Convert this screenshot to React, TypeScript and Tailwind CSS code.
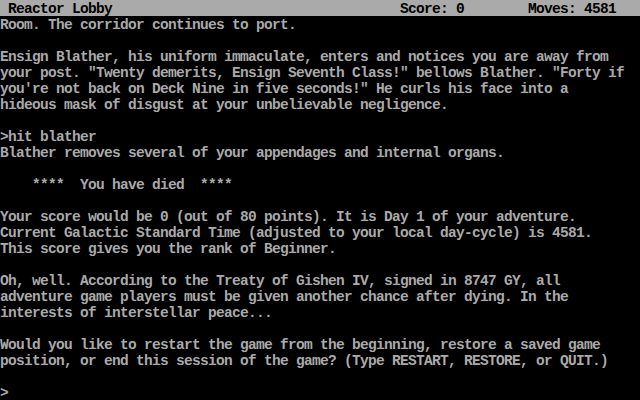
import React from "react";

const lines: string[] = [
  "Room. The corridor continues to port.",
  "",
  "Ensign Blather, his uniform immaculate, enters and notices you are away from",
  "your post. \"Twenty demerits, Ensign Seventh Class!\" bellows Blather. \"Forty if",
  "you're not back on Deck Nine in five seconds!\" He curls his face into a",
  "hideous mask of disgust at your unbelievable negligence.",
  "",
  ">hit blather",
  "Blather removes several of your appendages and internal organs.",
  "",
  "    ****  You have died  ****",
  "",
  "Your score would be 0 (out of 80 points). It is Day 1 of your adventure.",
  "Current Galactic Standard Time (adjusted to your local day-cycle) is 4581.",
  "This score gives you the rank of Beginner.",
  "",
  "Oh, well. According to the Treaty of Gishen IV, signed in 8747 GY, all",
  "adventure game players must be given another chance after dying. In the",
  "interests of interstellar peace...",
  "",
  "Would you like to restart the game from the beginning, restore a saved game",
  "position, or end this session of the game? (Type RESTART, RESTORE, or QUIT.)",
  "",
  ">",
];

export default function App() {
  return (
    <div
      className="w-[640px] h-[400px] bg-black overflow-hidden flex flex-col text-[14.5px] leading-[16px] tracking-[-0.7px] font-bold"
      style={{ fontFamily: '"Liberation Mono", "DejaVu Sans Mono", monospace' }}
    >
      <div className="h-[16px] bg-[#aaaaaa] text-black flex pt-[1px] whitespace-pre">
        <span className="w-[400px] pl-[8px]">Reactor Lobby</span>
        <span className="w-[128px]">Score: 0</span>
        <span>Moves: 4581</span>
      </div>
      <div className="flex flex-col text-[#aaaaaa]">
        {lines.map((l, i) => (
          <div key={i} className="h-[16px] pt-[1px] whitespace-pre">
            {l}
          </div>
        ))}
      </div>
    </div>
  );
}
